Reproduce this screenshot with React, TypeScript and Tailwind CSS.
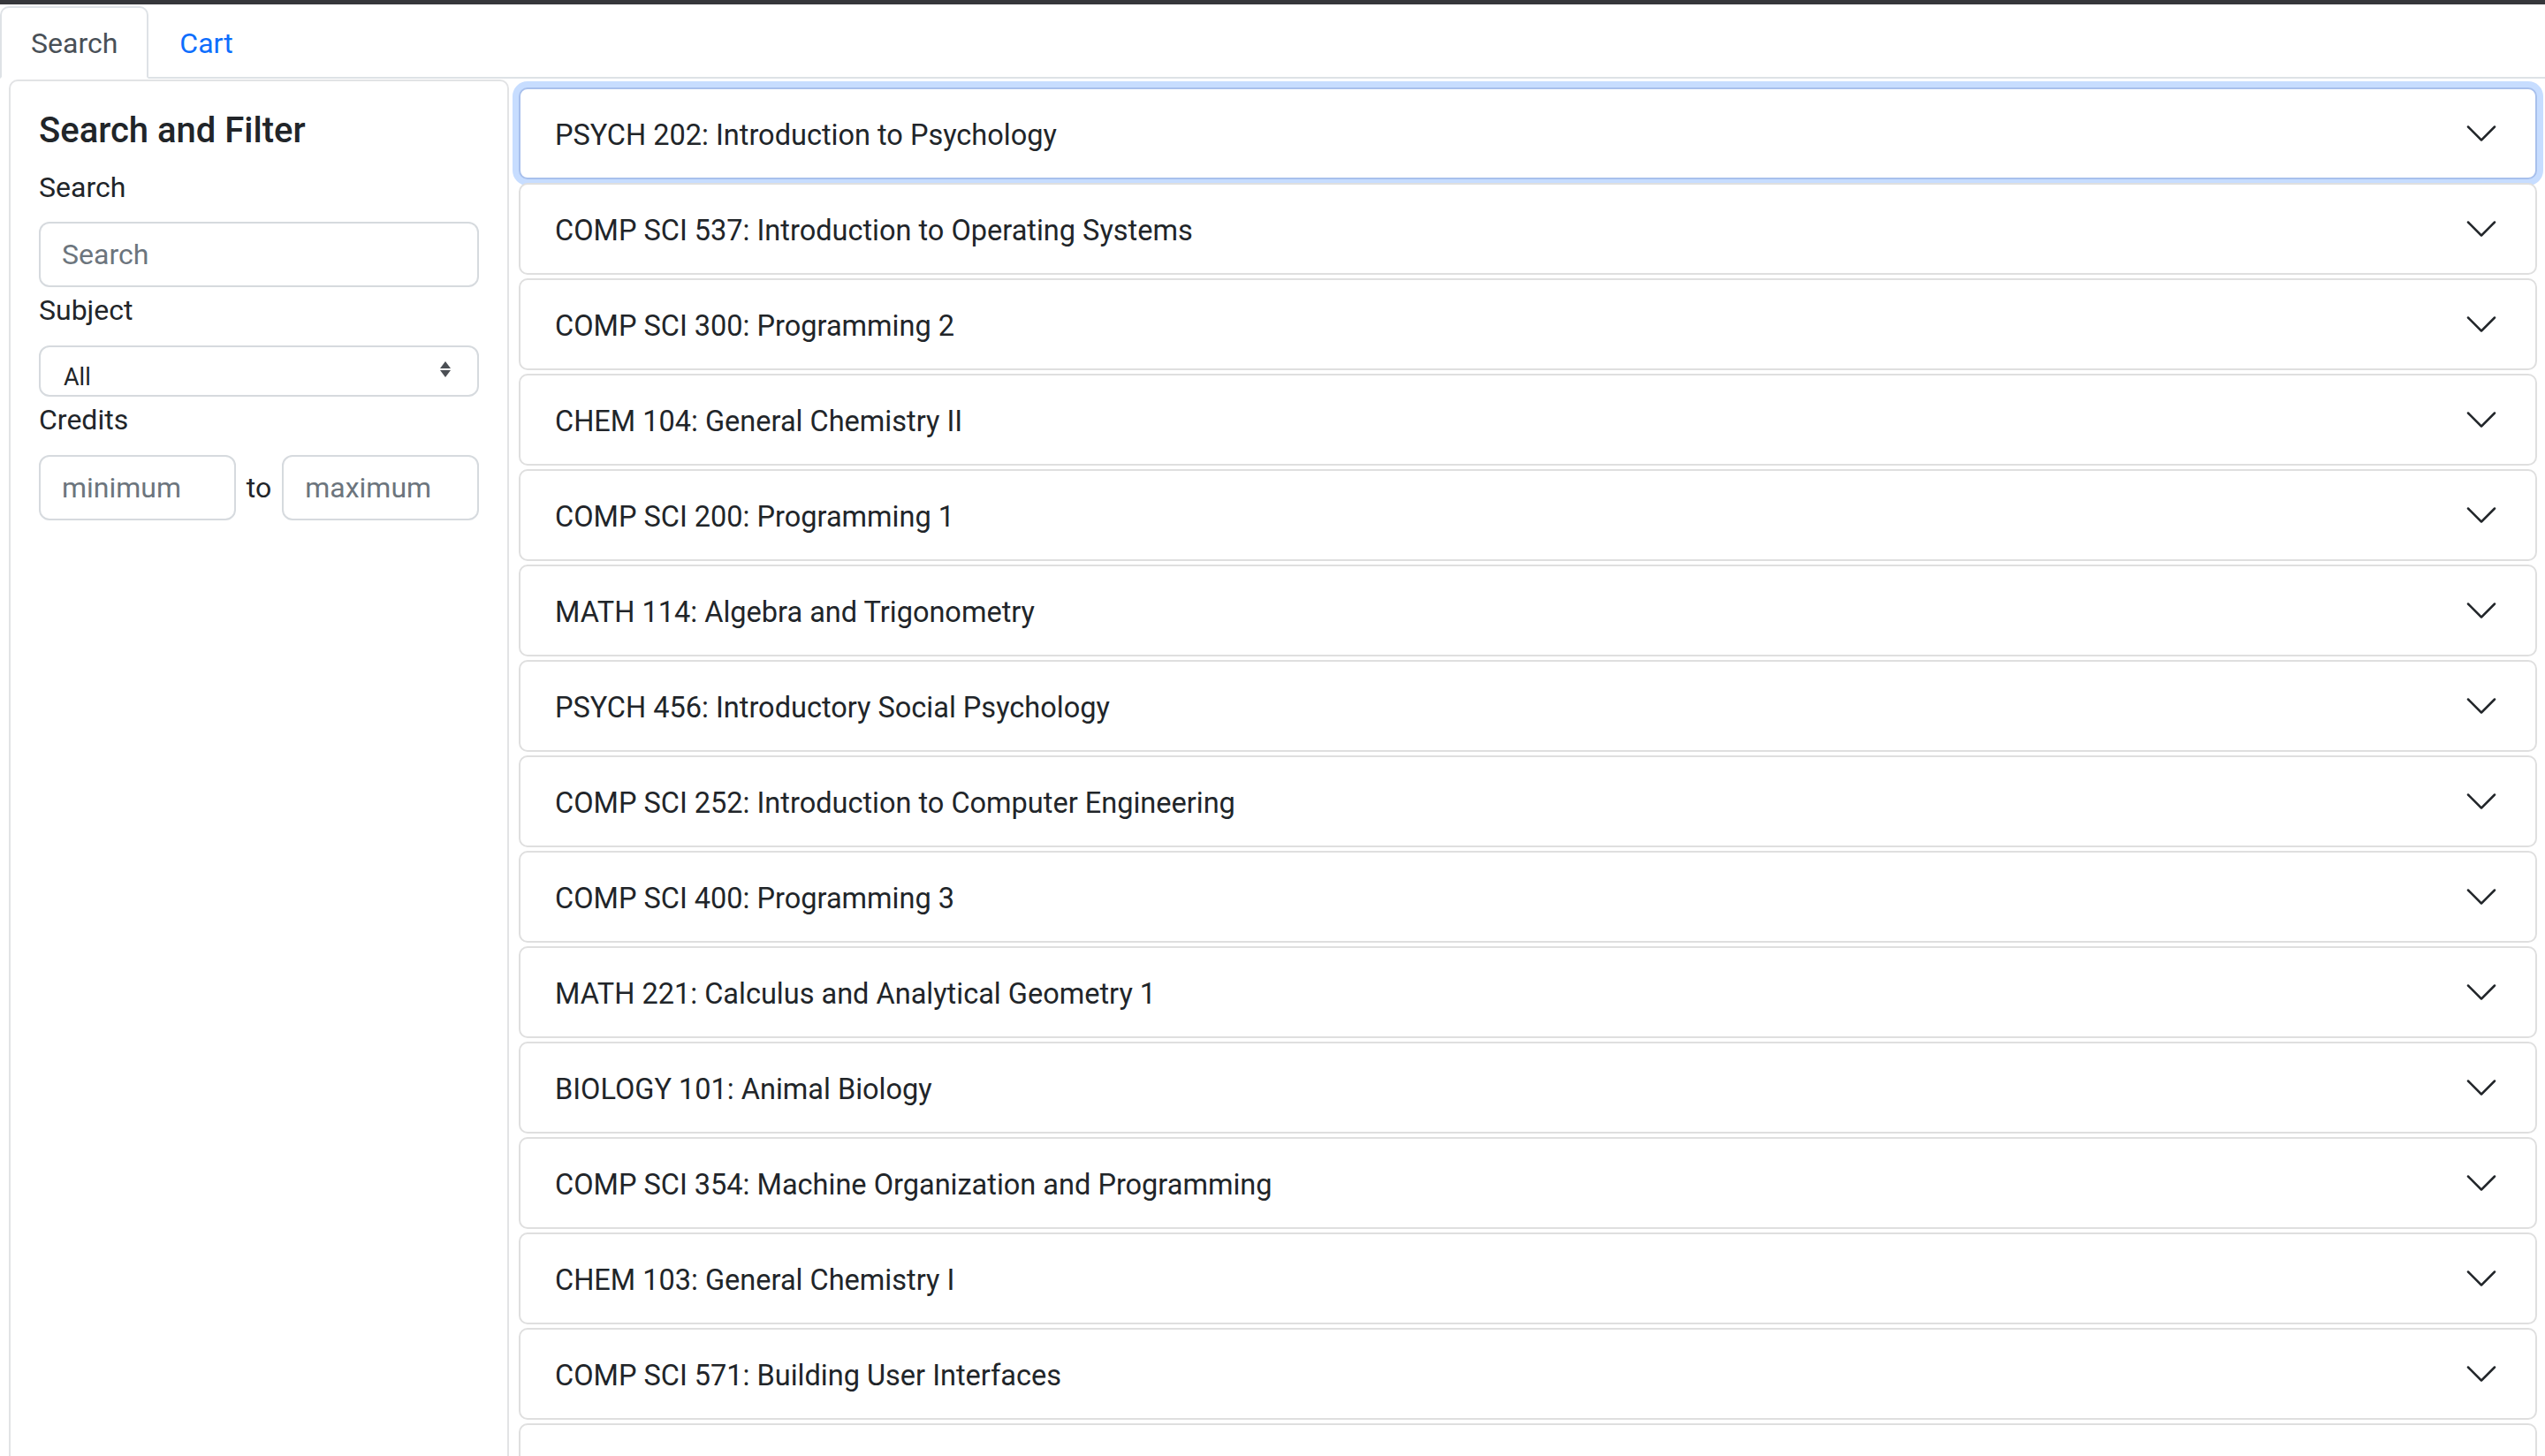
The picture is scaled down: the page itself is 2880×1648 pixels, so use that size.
import React from 'react';

const courses = [
  'PSYCH 202: Introduction to Psychology',
  'COMP SCI 537: Introduction to Operating Systems',
  'COMP SCI 300: Programming 2',
  'CHEM 104: General Chemistry II',
  'COMP SCI 200: Programming 1',
  'MATH 114: Algebra and Trigonometry',
  'PSYCH 456: Introductory Social Psychology',
  'COMP SCI 252: Introduction to Computer Engineering',
  'COMP SCI 400: Programming 3',
  'MATH 221: Calculus and Analytical Geometry 1',
  'BIOLOGY 101: Animal Biology',
  'COMP SCI 354: Machine Organization and Programming',
  'CHEM 103: General Chemistry I',
  'COMP SCI 571: Building User Interfaces',
];

const Chevron: React.FC = () => (
  <svg viewBox="0 0 16 16" className="h-10 w-10 shrink-0" fill="#212529">
    <path
      fillRule="evenodd"
      d="M1.646 4.646a.5.5 0 0 1 .708 0L8 10.293l5.646-5.647a.5.5 0 0 1 .708.708l-6 6a.5.5 0 0 1-.708 0l-6-6a.5.5 0 0 1 0-.708z"
    />
  </svg>
);

const SelectArrows: React.FC = () => (
  <svg viewBox="0 0 12 18" className="h-[18px] w-3 shrink-0 self-center" fill="#4b4f54">
    <path d="M0 8 L6 0 L12 8 Z" />
    <path d="M0 10 L12 10 L6 18 Z" />
  </svg>
);

const Sidebar: React.FC = () => (
  <aside className="w-[566px] shrink-0 ml-[10px] mt-px border-2 border-[#e2e3e5] rounded-[10px] px-8 pt-8 text-[#212529]">
    <h5 className="text-[40px] leading-[48px] font-medium">Search and Filter</h5>

    <label className="block mt-4 text-[32px] leading-[48px]">Search</label>
    <input
      type="text"
      placeholder="Search"
      className="block mt-[15px] h-[74px] w-full border-2 border-[#d6dade] rounded-[12px] px-6 text-[32px] placeholder:text-[#6c757d] outline-none"
    />

    <label className="block mt-0.5 text-[32px] leading-[48px]">Subject</label>
    <div className="mt-4 flex h-[58px] items-end justify-between border-2 border-[#d6dade] rounded-[12px] pl-[26px] pr-[30px] pb-1">
      <span className="text-[27px] leading-[32px]">All</span>
      <SelectArrows />
    </div>

    <label className="block mt-0.5 text-[32px] leading-[48px]">Credits</label>
    <div className="mt-4 flex items-center gap-3">
      <input
        type="text"
        placeholder="minimum"
        className="h-[74px] w-0 min-w-0 flex-1 border-2 border-[#d6dade] rounded-[12px] px-6 text-[32px] placeholder:text-[#6c757d] outline-none"
      />
      <span className="text-[32px] leading-[48px]">to</span>
      <input
        type="text"
        placeholder="maximum"
        className="h-[74px] w-0 min-w-0 flex-1 border-2 border-[#d6dade] rounded-[12px] px-6 text-[32px] placeholder:text-[#6c757d] outline-none"
      />
    </div>
  </aside>
);

const CourseList: React.FC = () => (
  <main className="flex-1 min-w-0 pt-[10px] pr-[9px] flex flex-col gap-1">
    {courses.map((course, i) => (
      <div
        key={course}
        className={
          i === 0
            ? 'flex h-[104px] shrink-0 items-center justify-between rounded-[10px] border-2 border-[#a8c0ec] bg-white pl-[39px] pr-[41px] shadow-[0_0_0_7px_rgba(13,110,253,0.23)]'
            : 'flex h-[104px] shrink-0 items-center justify-between rounded-[10px] border-2 border-[#dfdfdf] bg-white pl-[39px] pr-[41px]'
        }
      >
        <span className="pt-1 text-[32.5px] leading-[48px] text-[#212529]">{course}</span>
        <Chevron />
      </div>
    ))}
    {/* next item, only its top edge is in view */}
    <div className="h-[104px] shrink-0 rounded-[10px] border-2 border-[#dfdfdf] bg-white" />
  </main>
);

export default function App() {
  return (
    <div className="h-[1648px] overflow-hidden bg-white font-['Roboto',sans-serif]">
      <div className="h-[5px] bg-[#36373b]" />
      <nav className="flex border-b-2 border-[#dee2e6] pt-[2px]">
        <div className="-mb-[2px] border-2 border-[#dee2e6] border-b-white rounded-t-[10px] bg-white px-[33px] pt-4 pb-[14px] text-[32px] leading-[48px] text-[#495057]">
          Search
        </div>
        <div className="-mb-[2px] border-2 border-transparent px-[33px] pt-4 pb-[14px] text-[32px] leading-[48px] text-[#0d6efd]">
          Cart
        </div>
      </nav>
      <div className="flex gap-[11px]">
        <Sidebar />
        <CourseList />
      </div>
    </div>
  );
}
